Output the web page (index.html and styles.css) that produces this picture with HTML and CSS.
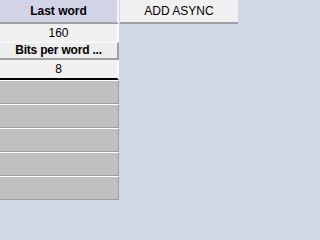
FILE: index.html
```html
<!DOCTYPE html>
<html>
<head>
<meta charset="utf-8">
<link rel="stylesheet" href="styles.css">
</head>
<body>
<div class="app">
  <div class="left">
    <div class="head">Last word</div>
    <div class="cell">160</div>
    <div class="btn">Bits per word ...</div>
    <div class="cell last">8</div>
    <div class="slot"></div>
    <div class="slot"></div>
    <div class="slot"></div>
    <div class="slot"></div>
    <div class="slot"></div>
  </div>
  <div class="right">
    <div class="add">ADD ASYNC</div>
    <div class="fill"></div>
  </div>
</div>
</body>
</html>
```
FILE: styles.css
```css
html, body {
  margin: 0;
  padding: 0;
}
body {
  width: 238px;
  height: 200px;
  overflow: hidden;
  background: #d1d8e5;
  font-family: "Liberation Sans", Arial, sans-serif;
  color: #000;
}
.app {
  display: flex;
  height: 200px;
}
.left {
  width: 119px;
  display: flex;
  flex-direction: column;
  flex: none;
}
.head {
  height: 22px;
  line-height: 23px;
  background: #d3d3e6;
  border-bottom: 2px solid #a0a0a0;
  border-right: 2px solid #f4f4f4;
  font-weight: bold;
  font-size: 12px;
  text-align: center;
}
.cell {
  height: 18px;
  line-height: 18px;
  background: #f0f0f0;
  border-right: 2px solid #fafafa;
  font-size: 12px;
  text-align: center;
}
.cell.last {
  border-bottom: 2px solid #000;
}
.btn {
  height: 15px;
  line-height: 15px;
  background: #ededed;
  border-top: 1px solid #fdfdfd;
  border-bottom: 2px solid #a0a0a0;
  border-right: 2px solid #a0a0a0;
  font-weight: bold;
  font-size: 12px;
  letter-spacing: -0.2px;
  text-align: center;
}
.slot {
  height: 22px;
  background: #c0c0c0;
  border-top: 1px solid #ffffff;
  border-bottom: 1px solid #a0a0a0;
  border-right: 1px solid #a0a0a0;
}
.right {
  flex: 1;
  display: flex;
  flex-direction: column;
}
.add {
  height: 22px;
  line-height: 23px;
  margin-left: 1px;
  background: #f0f0f0;
  border-bottom: 2px solid #a0a0a0;
  font-size: 12px;
  text-align: center;
}
.fill {
  flex: 1;
}
```
